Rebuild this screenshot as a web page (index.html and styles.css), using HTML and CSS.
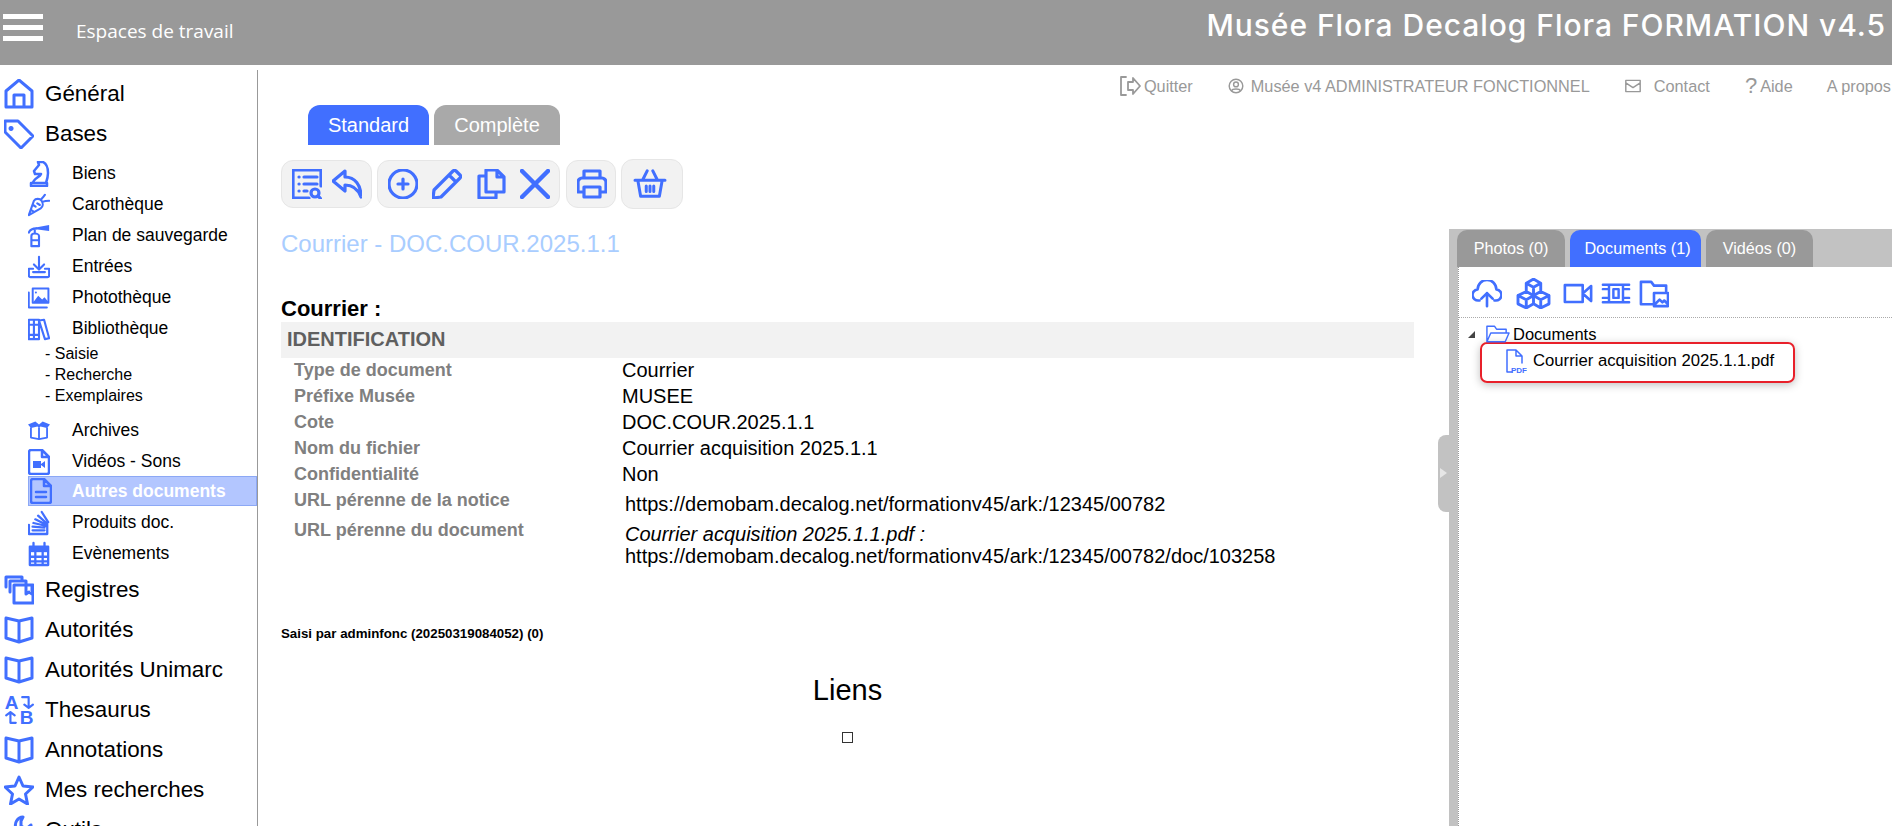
FILE: index.html
```html
<!DOCTYPE html>
<html lang="fr">
<head>
<meta charset="UTF-8">
<title>Musée Flora Decalog</title>
<link rel="stylesheet" href="styles.css">
</head>
<body>

<svg width="0" height="0" class="defs">
  <symbol id="i-book" viewBox="0 0 30 28"><path d="M15 5 2 2v20l13 4 13-4V2zM15 5v21"/></symbol>
</svg>

<header class="topbar">
  <div class="burger"><span></span><span></span><span></span></div>
  <div class="workspaces">Espaces de travail</div>
  <div class="app-title">Musée Flora Decalog Flora FORMATION v4.5</div>
</header>

<div class="layout">
  <nav class="sidebar">
    <a class="nav-main first"><svg class="ico-main" viewBox="0 0 30 30"><path d="M2 12 15 1l13 11v16H2zM10 28V16h10v12"/></svg>Général</a>
    <a class="nav-main"><svg class="ico-main" viewBox="0 0 30 30"><path d="M1 2h13l15 15-12 12L1 13zM7 8.500a1 1 0 1 0 .1 0"/></svg>Bases</a>

    <a class="nav-sub first-sub"><svg class="ico-sub" viewBox="0 0 22 26"><path d="M3 22h16v3H3zM5 22c0-4 7-6 8-9H7L6 10l5-6-1-3h5c4 2 5 7 5 11 0 4-1 7-2 10"/></svg>Biens</a>
    <a class="nav-sub"><svg class="ico-sub" viewBox="0 0 26 26"><path d="M1 25 7 8c2-3 7-3 9 0s2 7-1 9zM6 13l3 2M4 19l3 2M11 11l3 2M16 6c1-2 3-3 4-5M18 9c2-1 5-1 7-1"/></svg>Carothèque</a>
    <a class="nav-sub"><svg class="ico-sub" viewBox="0 0 26 26"><path d="M1 9c1-3 4-5 9-5M8 5v4M4 25V13c0-2 2-3 4-3s5 1 5 3v12zM4 18h9"/><path class="solid" d="M9 3l16-3v7L9 5z"/></svg>Plan de sauvegarde</a>
    <a class="nav-sub"><svg class="ico-sub" viewBox="0 0 26 26"><path d="M13 1v14M7 10l6 6 6-6M6 15H1v8c0 1 0 2 2 2h20c2 0 2-1 2-2v-8h-5M6 19h14"/></svg>Entrées</a>
    <a class="nav-sub"><svg class="ico-sub" viewBox="0 0 28 26"><path d="M6 1h20v18H6zM1 6v19h23M10 6h.1"/><path class="solid" d="M7 18l6-8 5 5 3-3 5 6v1H7z"/></svg>Photothèque</a>
    <a class="nav-sub"><svg class="ico-sub" viewBox="0 0 26 26"><path d="M1 2h6v23H1zM7 2h6v23H7zM13 3l6-1 6 22-5 1zM1 8h6M7 8h6M1 20h12"/></svg>Bibliothèque</a>
    <div class="nav-children">
      <a>- Saisie</a>
      <a>- Recherche</a>
      <a>- Exemplaires</a>
    </div>
    <a class="nav-sub after-children"><svg class="ico-sub" viewBox="0 0 30 26"><path d="M4 9v13l11 2 11-2V9M15 9v15"/><path class="solid" d="M0 4l10-4 5 4 5-4 10 4-4 5-9-2-2 2-2-2-9 2z"/></svg>Archives</a>
    <a class="nav-sub"><svg class="ico-sub" viewBox="0 0 22 26"><path d="M3 1h11l7 7v15a2 2 0 0 1-2 2H3a2 2 0 0 1-2-2V3a2 2 0 0 1 2-2zM14 1v7h7"/><path class="solid" d="M5 12h8v7H5zM13 15l4-3v7l-4-3z"/></svg>Vidéos - Sons</a>
    <a class="nav-sub active"><svg class="ico-sub" viewBox="0 0 22 26"><path d="M3 1h11l7 7v15a2 2 0 0 1-2 2H3a2 2 0 0 1-2-2V3a2 2 0 0 1 2-2zM14 1v7h7M6 14h10M6 19h10"/></svg>Autres documents</a>
    <a class="nav-sub"><svg class="ico-sub" viewBox="0 0 24 26"><path d="M1 15v10h20V15M5 21h13M5 17l13 1M6 13l13 3M8 9l12 6M11 5l10 9M15 1l7 11"/></svg>Produits doc.</a>
    <a class="nav-sub"><svg class="ico-sub" viewBox="0 0 24 26"><path d="M2 5h20v20H2zM6 1v6M18 1v6M2 16h20M2 21h20M8 11v14M16 11v14"/><path class="solid" d="M2 5h20v6H2z"/></svg>Evènements</a>

    <a class="nav-main reg"><svg class="ico-main" viewBox="0 0 30 30"><path d="M2 12V2h16v3M6 17V6h16v3M10 28V10h19v18zM22 10v9l3-2 3 2v-9"/></svg>Registres</a>
    <a class="nav-main"><svg class="ico-main" viewBox="0 0 30 28"><use href="#i-book"/></svg>Autorités</a>
    <a class="nav-main"><svg class="ico-main" viewBox="0 0 30 28"><use href="#i-book"/></svg>Autorités Unimarc</a>
    <a class="nav-main"><span class="ico-thes"><b>A</b><svg viewBox="0 0 14 14"><path d="M3 2h6v10M5 9l4 3 4-3"/></svg><svg viewBox="0 0 14 14"><path d="M11 12H6V2M2 5l4-3 4 3"/></svg><b>B</b></span>Thesaurus</a>
    <a class="nav-main"><svg class="ico-main" viewBox="0 0 30 28"><use href="#i-book"/></svg>Annotations</a>
    <a class="nav-main"><svg class="ico-main" viewBox="0 0 30 30"><path d="M15 2l4 9 10 1-7.500 7 2 10L15 24l-8.500 5 2-10L1 12l10-1z"/></svg>Mes recherches</a>
    <a class="nav-main"><svg class="ico-main" viewBox="0 0 30 30"><path d="M19 2a8 8 0 0 0-7 11L2 23l4 5 10-10a8 8 0 0 0 11-8l-5 4-5-3V6z"/></svg>Outils</a>
  </nav>

  <main class="content">
    <div class="userbar">
      <a><svg class="ico-user" viewBox="0 0 22 20"><path d="M7 1H2v18h5M9 6h5V2l7 8-7 8v-4H9z"/></svg>Quitter</a>
      <a class="gap-user"><svg class="ico-user small" viewBox="0 0 20 20"><circle cx="10" cy="10" r="8.500"/><circle cx="10" cy="8" r="3"/><path d="M4.500 16c1-3 10-3 11 0"/></svg>Musée v4 ADMINISTRATEUR FONCTIONNEL</a>
      <a class="gap-contact"><svg class="ico-user small wide" viewBox="0 0 20 16"><path d="M1 1h18v14H1zM1 4l9 6 9-6"/></svg>Contact</a>
      <a class="gap-aide"><span class="qmark">?</span>Aide</a>
      <a class="gap-apropos">A propos</a>
    </div>

    <div class="columns">
      <section class="notice">
        <div class="tabs">
          <span class="tab on">Standard</span>
          <span class="tab">Complète</span>
        </div>

        <div class="toolbar">
          <div class="tool-group g-list">
            <svg class="tool" viewBox="1 1 30 30"><path d="M18 30H2V2h28v16M8 9h.1M13 9h13M8 16h.1M13 16h13M8 23h.1M13 23h3"/><circle cx="24" cy="25" r="4"/><path d="M27 28l3 3"/></svg>
            <svg class="tool" viewBox="1 1 30 30"><path d="M14 3 2 13l12 10v-6c8 0 13 4 16 12 0-12-6-20-16-20z"/></svg>
          </div>
          <div class="tool-group g-edit">
            <svg class="tool" viewBox="1 1 30 30"><circle cx="16" cy="16" r="14"/><path d="M16 11v10M11 16h10"/></svg>
            <svg class="tool" viewBox="1 1 30 30"><path d="M2 30l1-8L22 3c1-1 2-1 3 0l4 4c1 1 1 2 0 3L10 29zM18 7l7 7"/></svg>
            <svg class="tool" viewBox="1 1 30 30"><path d="M11 24V2h11l7 7v15zM22 2v7h7M11 8H4v22h17v-6"/></svg>
            <svg class="tool cross" viewBox="1 1 30 30"><path d="M3 3l26 26M29 3 3 29"/></svg>
          </div>
          <div class="tool-group g-print">
            <svg class="tool" viewBox="1 1 30 30"><path d="M8 10V3h16v7M8 24H2V14c0-2 2-4 4-4h20c2 0 4 2 4 4v10h-6M8 19h16v10H8z"/></svg>
          </div>
          <div class="tool-group g-basket">
            <svg class="tool wide" viewBox="0 0 36 32"><path d="M2 12h32M5 12l3 17h20l3-17M10 12l5-10M26 12 21 2M14 18v6M18 18v6M22 18v6"/></svg>
          </div>
        </div>

        <h1 class="doc-title">Courrier - DOC.COUR.2025.1.1</h1>
        <h2 class="form-name">Courrier :</h2>
        <div class="band">IDENTIFICATION</div>

        <dl class="fields">
          <div class="row"><dt>Type de document</dt><dd>Courrier</dd></div>
          <div class="row"><dt>Préfixe Musée</dt><dd>MUSEE</dd></div>
          <div class="row"><dt>Cote</dt><dd>DOC.COUR.2025.1.1</dd></div>
          <div class="row"><dt>Nom du fichier</dt><dd>Courrier acquisition 2025.1.1</dd></div>
          <div class="row"><dt>Confidentialité</dt><dd>Non</dd></div>
          <div class="row url"><dt>URL pérenne de la notice</dt><dd>https://demobam.decalog.net/formationv45/ark:/12345/00782</dd></div>
          <div class="row url last"><dt>URL pérenne du document</dt><dd><em>Courrier acquisition 2025.1.1.pdf :</em><br>https://demobam.decalog.net/formationv45/ark:/12345/00782/doc/103258</dd></div>
        </dl>

        <p class="saisi">Saisi par adminfonc (20250319084052) (0)</p>

        <div class="liens">
          <h3>Liens</h3>
          <span class="checkbox"></span>
        </div>
      </section>

      <aside class="media">
        <div class="splitter"><span></span></div>
        <div class="media-panel">
          <div class="media-tabs">
            <span class="mtab">Photos (0)</span>
            <span class="mtab on">Documents (1)</span>
            <span class="mtab">Vidéos (0)</span>
          </div>
          <div class="media-tools">
            <svg class="mtool m-cloud" viewBox="0 0 32 30"><path d="M8 22H7a6 6 0 0 1-1-12 10 10 0 0 1 20 0 6 6 0 0 1-1 12h-1M16 28V14M10 20l6-6 6 6"/></svg>
            <svg class="mtool m-cubes" viewBox="2 1 32 30"><path d="M18 2l7 4v8l-7 4-7-4V6zM11 14l7 4v8l-7 4-8-4v-8zM25 14l8 4v8l-8 4-7-4v-8zM11 6l7 4 7-4M3 18l8 4 7-4M18 18l7 4 8-4M18 10v8M11 22v8M25 22v8"/></svg>
            <svg class="mtool m-flat" viewBox="0 0 32 22"><path d="M2 2h19v18H2zM30 3l-9 8 9 8z"/></svg>
            <svg class="mtool m-flat" viewBox="0 0 32 24"><path d="M1 2h30M1 22h30M8 2v20M24 2v20M13 7h6v10h-6zM1 7h7M24 7h7M1 17h7M24 17h7"/></svg>
            <svg class="mtool" viewBox="0 0 32 30"><path d="M14 26H2V2h11l3 4h13v6M16 14h15v14H16zM17 26l5-5 3 3 2-2 4 4"/></svg>
          </div>
          <div class="tree">
            <div class="tree-root">
              <span class="arrow"></span>
              <svg class="folder" viewBox="0 0 26 20"><path d="M2 18V2h8l2 3h10v4M2 18l4-9h19l-4 9z"/></svg>
              Documents
            </div>
            <div class="tree-file">
              <svg class="pdf" viewBox="0 0 22 26"><path d="M7 24H2V2h9l6 6v7M11 2v6h6"/><text x="6" y="25">PDF</text></svg>
              Courrier acquisition 2025.1.1.pdf
            </div>
          </div>
        </div>
      </aside>
    </div>
  </main>
</div>

</body>
</html>
```

FILE: styles.css
```css
* { box-sizing: border-box; }
html, body { height: 100%; }
body { margin: 0; overflow: hidden; font-family: "Liberation Sans", Arial, sans-serif; color: #000; background-color: #fff; }
.defs { position: absolute; }
svg { fill: none; stroke: #416fff; stroke-linejoin: round; stroke-linecap: round; flex: none; }

/* top bar */
.topbar { display: flex; align-items: center; height: 65px; background-color: #999; color: #fff; }
.burger { display: flex; flex-direction: column; gap: 6px; width: 40px; margin-left: 3px; margin-top: -11px; }
.burger span { display: block; height: 5px; background-color: #fff; }
.workspaces { margin-left: 33px; margin-top: -3px; font-family: "Open Sans", sans-serif; font-size: 19px; }
.app-title { margin-left: auto; margin-right: 6px; margin-top: -15px; font-family: Inter, sans-serif; font-size: 30px; font-weight: 500; letter-spacing: .95px; white-space: nowrap; }

/* sidebar */
.layout { display: flex; height: 761px; }
.sidebar { width: 258px; margin-top: 5px; height: 756px; flex: none; border-right: 1px solid #999; overflow: hidden; padding-top: 4px; }
.sidebar a { display: flex; align-items: center; }
.nav-main { height: 40px; padding-left: 4px; font-size: 22.400px; }
.ico-main { width: 30px; height: 30px; margin-right: 11px; stroke-width: 3; }
.nav-sub { height: 31px; padding-left: 28px; font-size: 17.500px; }
.first-sub { margin-top: 4px; }
.nav-sub.active { height: 30px; margin-top: -1px; margin-bottom: 1px; margin-left: 28px; padding-left: 1px; background-color: #b3c6ff; border: 1px solid #8ca8f5; color: #fff; font-weight: 700; }
.ico-sub { width: 22px; height: 26px; margin-right: 22px; stroke-width: 2.500; }
.active .ico-sub { margin-right: 20px; }
.solid { fill: #416fff; stroke: none; }
.nav-children { padding-left: 45px; font-size: 16px; margin-top: -1px; }
.nav-children a { height: 21px; }
.after-children { margin-top: 9px; }
.nav-main.reg { margin-top: .500px; }
.ico-thes { display: grid; grid-template-columns: 15px 15px; grid-auto-rows: 15px; width: 30px; margin-right: 11px; color: #416fff; font-size: 19px; line-height: 15px; text-align: center; }
.ico-thes b { font-weight: 700; }
.ico-thes svg { width: 15px; height: 15px; stroke-width: 2; }

/* main */
.content { flex: 1; min-width: 0; }
.userbar { display: flex; align-items: center; justify-content: flex-end; height: 22px; margin-top: 10px; margin-bottom: -1px; font-size: 16.300px; color: #999; white-space: nowrap; }
.userbar a { display: flex; align-items: center; }
.ico-user { width: 22px; height: 20px; margin-right: 3px; stroke: #999; stroke-width: 1.800; }
.ico-user.small { width: 16px; height: 16px; margin-right: 7px; }
.ico-user.wide { margin-right: 13px; }
.gap-user, .gap-contact, .gap-aide { margin-left: 35px; }
.gap-apropos { margin-left: 34px; margin-right: 1px; }
.qmark { font-size: 22px; margin-right: 3px; }

.columns { display: flex; }
.notice { width: 1191px; flex: none; padding-left: 23px; }
.tabs { display: flex; gap: 5px; margin-left: 27px; margin-top: 9px; height: 40px; }
.tab { display: flex; align-items: center; justify-content: center; width: 126px; border-radius: 12px 12px 0 0; background-color: #a9a9a9; color: #fff; font-size: 20px; }
.tab.on { width: 121px; background-color: #416fff; }

.toolbar { display: flex; align-items: flex-start; gap: 5px; margin-top: 15px; }
.tool-group { display: flex; align-items: center; justify-content: space-between; height: 48px; padding: 0 9px 0 10px; background-color: #f2f2f2; border: 1px solid #e6e6e6; border-radius: 12px; }
.g-list { width: 91px; }
.g-edit { width: 183px; }
.g-print { width: 50px; margin-left: 1px; }
.g-basket { width: 62px; height: 50px; margin-top: -1px; }
.tool { width: 30px; height: 30px; stroke-width: 3.200; }
.tool.cross { stroke-width: 4.500; }
.tool.wide { width: 36px; }

.doc-title { margin: 22px 0 0; font-size: 24px; font-weight: 400; color: #a9cdff; line-height: 26px; }
.form-name { margin: 40px 0 0; font-size: 22px; font-weight: 700; line-height: 24px; }
.band { height: 36px; margin-top: 1px; width: 1133px; padding: 5px 6px 0; background-color: #f2f2f2; color: #5f5f5f; font-size: 20px; font-weight: 700; line-height: 24px; }

.fields { margin: 0; padding: 0; font-size: 20px; }
.row { display: flex; height: 26px; line-height: 25px; }
.row dt { width: 341px; padding-left: 13px; flex: none; color: #808080; font-size: 18px; font-weight: 700; line-height: 24px; }
.row dd { margin: 0; }
.row.url { height: 30px; line-height: 22px; }
.row.url.last { height: auto; }
.row.url dd { padding-left: 3px; padding-top: 5px; }
.saisi { margin: 59px 0 0; font-size: 13.300px; font-weight: 700; line-height: 16px; }
.liens { display: flex; flex-direction: column; align-items: center; width: 1133px; margin-top: 30px; }
.liens h3 { margin: 0; font-size: 29px; font-weight: 400; line-height: 36px; }
.checkbox { width: 11px; height: 11px; margin-top: 24px; border: 1px solid #333; background-color: #fff; }

/* media panel */
.media { display: flex; flex: 1; min-width: 0; margin-top: 133px; height: 597px; position: relative; }
.splitter { width: 9px; flex: none; background-color: #c2c2c2; }
.splitter span { position: absolute; left: -11px; top: 206px; width: 11px; height: 77px; border-radius: 8px 0 0 8px; background-color: #c2c2c2; }
.splitter span::after { content: ""; position: absolute; left: 2px; top: 33px; border-left: 7px solid #e6e6e6; border-top: 5px solid transparent; border-bottom: 5px solid transparent; }
.media-panel { flex: 1; min-width: 0; border-left: 1px dotted #999; }
.media-tabs { display: flex; gap: 5px; height: 38px; margin-left: -2px; background-color: #c2c2c2; align-items: flex-end; }
.mtab { display: flex; align-items: center; justify-content: center; width: 108px; height: 37px; border-radius: 10px 10px 0 0; background-color: #999; color: #fff; font-size: 16.200px; }
.mtab.on { width: 131px; padding-left: 4px; background-color: #416fff; }
.media-tabs .mtab:last-child { width: 107px; }
.media-tools { display: flex; align-items: center; gap: 8px; height: 51px; padding-left: 13px; padding-top: 3px; border-bottom: 1px dotted #aaa; }
.mtool { width: 30px; height: 28px; stroke-width: 2.800; }
.m-cloud { margin-right: 6px; }
.m-cubes { width: 35px; height: 31px; margin-right: 4px; }
.m-flat { height: 21px; }
.tree { padding-top: 7px; font-size: 16.500px; }
.tree-root { display: flex; align-items: center; height: 18px; padding-left: 9px; }
.arrow { width: 0; height: 0; margin-right: 10px; border-left: 7px solid transparent; border-bottom: 7px solid #444; }
.folder { width: 25px; height: 20px; margin-right: 3px; stroke-width: 1.500; }
.tree-file { display: flex; align-items: center; width: 315px; height: 41px; margin-left: 21px; margin-top: -1px; padding-left: 23px; padding-bottom: 3px; border: 2px solid #e8202a; border-radius: 7px; box-shadow: 0 2px 8px rgba(0, 0, 0, .25); font-size: 16.700px; }
.pdf { width: 22px; height: 26px; margin-right: 6px; stroke-width: 1.500; }
.pdf text { font-family: "Liberation Sans", sans-serif; font-size: 8px; font-weight: 700; fill: #416fff; stroke: none; }
```
